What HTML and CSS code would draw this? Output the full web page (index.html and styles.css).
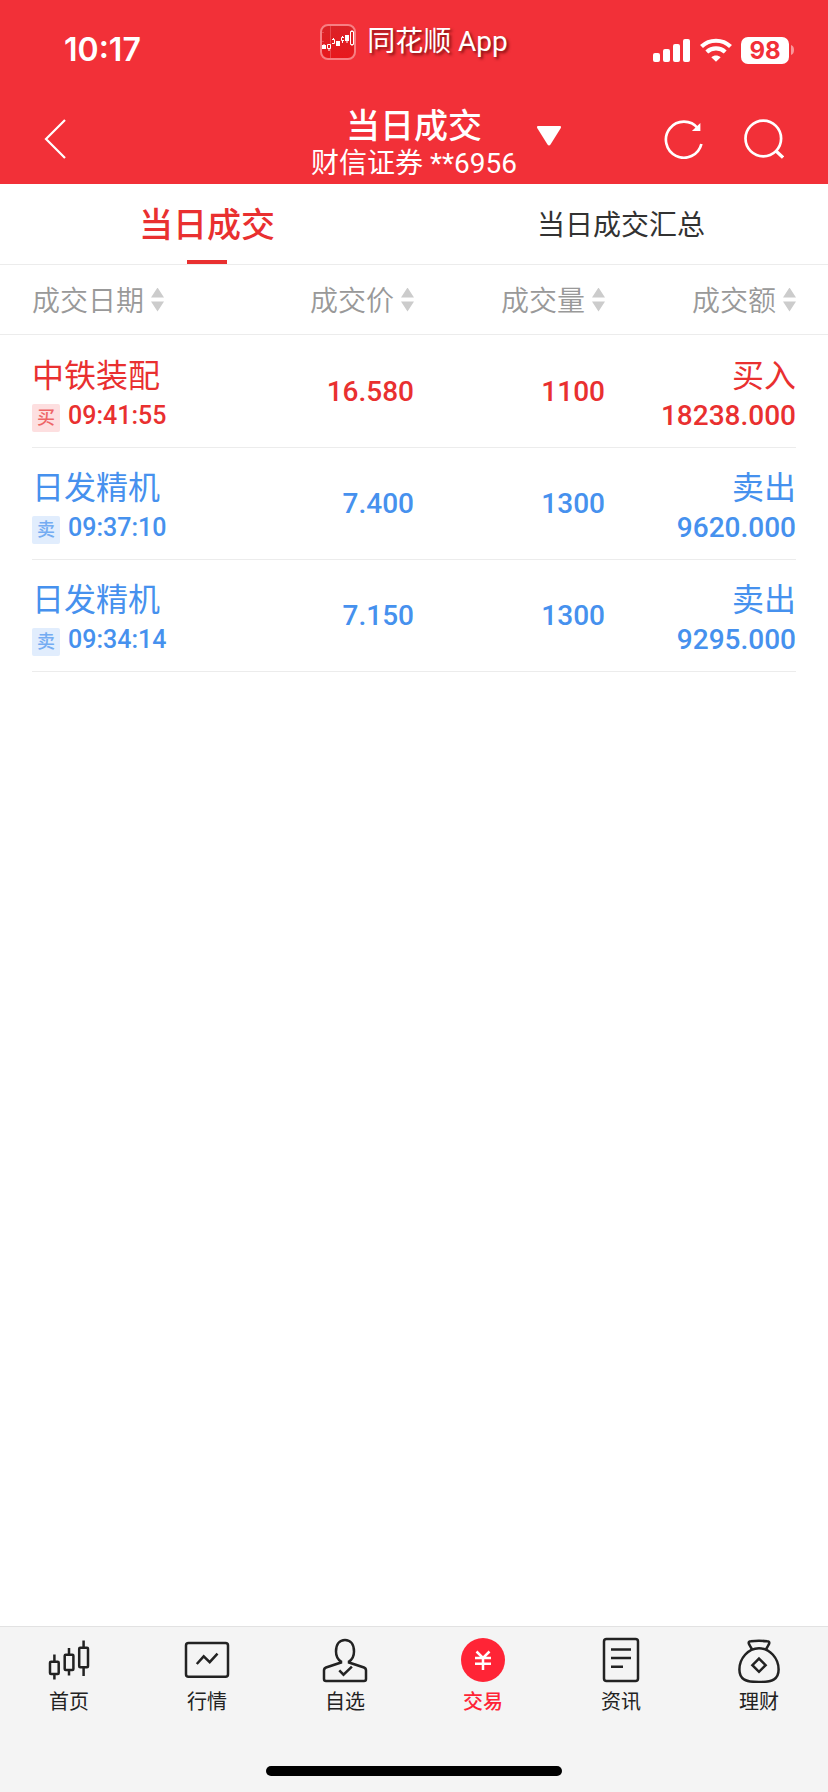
FILE: index.html
```html
<!DOCTYPE html>
<html lang="zh-CN">
<head>
  <meta charset="UTF-8">
  <meta name="viewport" content="width=device-width, initial-scale=1.0">
  <title>当日成交</title>
  <link rel="stylesheet" href="styles.css">
</head>
<body>

  <header class="header">
    <!-- Status bar -->
    <div class="status-bar">
      <span class="status-time">10:17</span>
      <div class="status-app">
        <svg class="app-icon" width="36" height="36" viewBox="0 0 36 36" fill="none">
          <defs>
            <linearGradient id="app-bg" x1="0" y1="0" x2="0" y2="1">
              <stop offset="0" stop-color="#da2328"/>
              <stop offset="1" stop-color="#e8181d"/>
            </linearGradient>
          </defs>
          <rect x="1" y="1" width="34" height="34" rx="7" fill="url(#app-bg)" stroke="#f77f83" stroke-width="2"/>
          <path d="M10.500 2v32M2 8.500h2M2 17.500h2" stroke="#e8494d"/>
          <path d="M2 21h4v4H2zM4 20v1M16 17h4v5h-4zM25 11h4v6h-4zM27 17v2" fill="#fff"/>
          <path d="M4 20v2M7.500 20.500h3v4h-3zM9 25v2M12 15.500h2.500v4H12M13.500 14v1.500M24 13.500h-2.500v3H24M22.500 12v1.500M22.500 17v2M27 17v2M30.500 7.500h3v13h-3zM32 6v1M32 21v1" stroke="#fff"/>
        </svg>
        <span class="app-name">同花顺 App</span>
      </div>
      <div class="status-icons">
        <svg width="38" height="24" viewBox="0 0 38 24" fill="#fff">
          <rect x="0" y="15" width="7" height="9" rx="2"/>
          <rect x="10" y="11" width="7" height="13" rx="2"/>
          <rect x="20" y="6" width="7" height="18" rx="2"/>
          <rect x="30" y="1" width="7" height="23" rx="2"/>
        </svg>
        <svg width="32" height="24" viewBox="0 0 32 24" fill="none" stroke="#fff" stroke-width="4.200">
          <path d="M1.500 8.600C9.500 .8 22.500 .8 30.500 8.600"/>
          <path d="M6.800 14c5.200-4.800 13.200-4.800 18.400 0"/>
          <path d="M11.300 19.200c2.800-2.400 6.600-2.400 9.400 0L16 23.800z" fill="#fff" stroke="none"/>
        </svg>
        <span class="battery">98</span>
        <svg class="battery-cap" width="3" height="10" viewBox="0 0 3 10"><path d="M0 0c4 1 4 9 0 10z" fill="#f9979b"/></svg>
      </div>
    </div>

    <!-- Title bar -->
    <div class="title-bar">
      <button class="icon-button" type="button" aria-label="返回">
        <svg width="24" height="42" viewBox="0 0 24 42" fill="none" stroke="#fff" stroke-width="2.200">
          <path d="M21 2L2 21l19 19"/>
        </svg>
      </button>
      <div class="title">
        <h1>当日成交</h1>
        <p>财信证券 **6956</p>
      </div>
      <div class="title-actions">
        <button class="icon-button dropdown" type="button" aria-label="切换账户">
          <svg width="24" height="20" viewBox="0 0 24 20" fill="#fff">
            <path d="M1 0h22q1.500 0 .8 2L13.500 18.500q-1.500 2-3 0L.2 2Q-.5 0 1 0z"/>
          </svg>
        </button>
        <button class="icon-button refresh" type="button" aria-label="刷新">
          <svg width="40" height="40" viewBox="0 0 40 40" fill="none" stroke="#fff" stroke-width="2.700">
            <path d="M37.400 25A18 18 0 1 1 34 9.500"/>
            <path d="M36.400 4v8h-8.500z" fill="#fff" stroke="none"/>
          </svg>
        </button>
        <button class="icon-button" type="button" aria-label="搜索">
          <svg width="40" height="40" viewBox="0 0 40 40" fill="none" stroke="#fff" stroke-width="2.700">
            <circle cx="19.300" cy="19.500" r="17.800"/>
            <path d="M32 32l7 6.600" stroke-width="3.200"/>
          </svg>
        </button>
      </div>
    </div>
  </header>

  <nav class="tabs">
    <a class="tab active" href="#today">当日成交</a>
    <a class="tab" href="#summary">当日成交汇总</a>
  </nav>

  <main class="content">
    <table class="trades">
      <thead>
        <tr>
          <th scope="col"><button class="sort" type="button">成交日期</button></th>
          <th scope="col"><button class="sort" type="button">成交价</button></th>
          <th scope="col"><button class="sort" type="button">成交量</button></th>
          <th scope="col"><button class="sort" type="button">成交额</button></th>
        </tr>
      </thead>
      <tbody>
        <tr class="buy">
          <td>
            <div class="name">中铁装配</div>
            <div class="time"><span class="badge">买</span>09:41:55</div>
          </td>
          <td class="number">16.580</td>
          <td class="number">1100</td>
          <td>
            <div class="name">买入</div>
            <div class="amount">18238.000</div>
          </td>
        </tr>
        <tr class="sell">
          <td>
            <div class="name">日发精机</div>
            <div class="time"><span class="badge">卖</span>09:37:10</div>
          </td>
          <td class="number">7.400</td>
          <td class="number">1300</td>
          <td>
            <div class="name">卖出</div>
            <div class="amount">9620.000</div>
          </td>
        </tr>
        <tr class="sell">
          <td>
            <div class="name">日发精机</div>
            <div class="time"><span class="badge">卖</span>09:34:14</div>
          </td>
          <td class="number">7.150</td>
          <td class="number">1300</td>
          <td>
            <div class="name">卖出</div>
            <div class="amount">9295.000</div>
          </td>
        </tr>
      </tbody>
    </table>
  </main>

  <!-- Bottom navigation -->
  <footer class="footer">
    <nav class="bottom-nav">
      <a href="#home">
        <svg class="nav-icon" viewBox="0 0 48 48">
          <rect x="5" y="26.700" width="8.700" height="12.200" rx="1"/>
          <rect x="19.700" y="19.700" width="8.700" height="15.200" rx="1"/>
          <rect x="34.200" y="12.700" width="8.800" height="19.600" rx="1"/>
          <path d="M9.400 19.500v7M9.400 39v5.500M24 13v6.500M24 35v5.500M38.600 5.500v7M38.600 32.500v8.500"/>
        </svg>
        首页
      </a>
      <a href="#market">
        <svg class="nav-icon" viewBox="0 0 48 48">
          <rect x="3" y="8" width="42" height="33.700" rx="2.500"/>
          <path d="M13.800 29l6.900-7.600 6 5.800 7.800-8.600"/>
        </svg>
        行情
      </a>
      <a href="#watchlist">
        <svg class="nav-icon" viewBox="0 0 48 48">
          <path d="M20 26.500v1L5 32.500q-2 .8-2 3V44q0 2 2 2h38q2 0 2-2v-8.500q0-2.200-2-3l-15-5v-1c3.500-2.200 5-5.500 5-10 0-7-3.500-11.500-9-11.500s-9 4.500-9 11.500c0 4.500 1.500 7.800 5 10z"/>
          <path d="M18.300 35.300l4.200 4.400 8.400-8"/>
        </svg>
        自选
      </a>
      <a class="active" href="#trade">
        <svg class="nav-icon" viewBox="0 0 48 48">
          <circle cx="24" cy="25" r="22" fill="#ff2436" stroke="none"/>
          <path d="M17.500 16.500l6.500 6.500 6.500-6.500M24 22.500V35M16 23h16M16 28.700h16" stroke="#fff"/>
        </svg>
        交易
      </a>
      <a href="#news">
        <svg class="nav-icon" viewBox="0 0 48 48">
          <rect x="7" y="4" width="34" height="42" rx="2.500"/>
          <path d="M14 14.500h20M14 23h20M14 31.700h12"/>
        </svg>
        资讯
      </a>
      <a href="#wealth">
        <svg class="nav-icon" viewBox="0 0 48 48">
          <path d="M17 14.500c-1-2.500-2.500-4-3.200-6-.4-1.500.4-2.200 2-2.200 5-.6 11.400-.6 16.400 0 1.600 0 2.400.7 2 2.200-.7 2-2.200 3.500-3.200 6"/>
          <path d="M24 13.300c-11 0-19.600 10.200-19.600 21.200C4.400 44 10 47 24 47s19.600-3 19.600-12.500c0-11-8.600-21.200-19.600-21.200z"/>
          <path d="M24 23.600l6.600 6.600-6.600 6.600-6.600-6.600z"/>
        </svg>
        理财
      </a>
    </nav>
    <div class="home-indicator"></div>
  </footer>

</body>
</html>
```
FILE: styles.css
```css
/* General */
* {
  box-sizing: border-box;
}

body {
  margin: 0;
  min-height: 100vh;
  display: flex;
  flex-direction: column;
  background-color: #fff;
  color: #323232;
  font-family: "Noto Sans CJK SC", sans-serif;
}

a {
  color: inherit;
  text-decoration: none;
}

button {
  padding: 0;
  border: none;
  background: none;
  color: inherit;
  font: inherit;
  cursor: pointer;
}

svg {
  display: block;
}

/* Header */
.header {
  background-color: #f23038;
  color: #fff;
}

.status-bar {
  display: grid;
  grid-template-columns: 1fr auto 1fr;
  align-items: center;
  height: 92px;
  padding: 8px 34px 0;
}

.status-time {
  padding-left: 30px;
  font-family: Inter, sans-serif;
  font-size: 32px;
  font-weight: 600;
  line-height: 40px;
}

.status-app {
  display: flex;
  align-items: center;
  gap: 11px;
  padding-bottom: 16px;
}

.app-name {
  font-family: Roboto, "Noto Sans CJK SC", sans-serif;
  font-size: 28px;
  line-height: 36px;
  text-shadow: 2px 2px 3px rgba(80, 0, 0, 0.7);
}

.status-icons {
  display: flex;
  align-items: center;
  justify-content: flex-end;
}

.battery {
  width: 48px;
  margin-left: 9px;
  margin-right: 2px;
  border-radius: 7px;
  background-color: #fff;
  color: #f23038;
  font-family: Inter, sans-serif;
  font-size: 24px;
  font-weight: 700;
  line-height: 27px;
  text-align: center;
}

.status-icons svg + svg {
  margin-left: 9px;
}

.title-bar {
  display: grid;
  grid-template-columns: 1fr auto 1fr;
  align-items: center;
  height: 92px;
  padding: 2px 44px 0;
}

.icon-button {
  justify-self: start;
}

.title {
  padding-top: 10px;
  text-align: center;
}

.title h1 {
  margin: 0;
  font-size: 34px;
  font-weight: 500;
  line-height: 40px;
}

.title p {
  margin: 0;
  font-family: Roboto, "Noto Sans CJK SC", sans-serif;
  font-size: 28px;
  line-height: 40px;
}

.title-actions {
  display: flex;
  align-items: center;
  gap: 40px;
  padding-left: 20px;
}

.dropdown {
  padding-bottom: 6px;
}

.refresh {
  margin-left: auto;
}

/* Tabs */
.tabs {
  display: flex;
  border-bottom: 1px solid #ececec;
}

.tab {
  flex: 1;
  display: flex;
  flex-direction: column;
  align-items: center;
  font-size: 28px;
  line-height: 78px;
}

.tab.active {
  color: #e93030;
  font-size: 34px;
  font-weight: 500;
}

.tab.active::after {
  content: "";
  width: 40px;
  height: 4px;
  margin-top: -2px;
  background-color: #e93030;
}

/* Trades table */
.content {
  flex: 1;
}

.trades,
.trades thead,
.trades tbody {
  display: block;
}

.trades tbody {
  padding-top: 1px;
}

.trades tr {
  display: grid;
  grid-template-columns: repeat(4, 1fr);
}

.trades thead tr {
  padding: 0 32px;
  border-bottom: 1px solid #ececec;
}

.trades tbody tr {
  margin: 0 32px;
  border-bottom: 1px solid #ececec;
}

.trades th,
.trades td {
  padding: 0;
  text-align: right;
  white-space: nowrap;
}

.trades th:first-child,
.trades td:first-child {
  text-align: left;
}

.trades th {
  color: #999;
  font-size: 28px;
  font-weight: 350;
  line-height: 69px;
}

.sort {
  display: inline-flex;
  align-items: center;
  gap: 7px;
}

.sort::after {
  content: "";
  width: 13px;
  height: 24px;
  background-color: #ccc;
  clip-path: polygon(50% 0, 100% 42%, 0 42%, 0 58%, 100% 58%, 50% 100%, 0 58%, 0 42%);
}

.trades td {
  padding: 20px 0 11px;
  font-family: Roboto, "Noto Sans CJK SC", sans-serif;
}

.buy {
  color: #e93030;
}

.sell {
  color: #4691ee;
}

.name {
  font-size: 32px;
  line-height: 40px;
}

.time,
.amount,
.number {
  font-size: 28px;
  font-weight: 500;
  line-height: 40px;
}

.trades .number {
  padding: 0;
  line-height: 111px;
}

.time {
  display: flex;
  align-items: center;
  gap: 8px;
  font-size: 25px;
}

.badge {
  width: 28px;
  margin-top: 4px;
  border-radius: 2px;
  font-size: 18px;
  line-height: 28px;
  text-align: center;
}

.buy .badge {
  background-color: #fddfe0;
  color: #ee6668;
}

.sell .badge {
  background-color: #e1edfd;
  color: #74acf2;
}

/* Bottom navigation */
.footer {
  display: flex;
  flex-direction: column;
  align-items: center;
  padding-bottom: 16px;
  border-top: 1px solid #e2e2e2;
  background-color: #f4f4f4;
}

.bottom-nav {
  display: flex;
  width: 100%;
  padding: 8px 0 52px;
}

.bottom-nav a {
  flex: 1;
  display: flex;
  flex-direction: column;
  align-items: center;
  gap: 5px;
  color: #222;
  font-size: 20px;
  line-height: 26px;
}

.bottom-nav .active {
  color: #ff2436;
  font-weight: 500;
}

.nav-icon {
  width: 48px;
  height: 48px;
  fill: none;
  stroke: #222;
  stroke-width: 2.5px;
}

.home-indicator {
  width: 296px;
  height: 10px;
  border-radius: 5px;
  background-color: #000;
}
```
